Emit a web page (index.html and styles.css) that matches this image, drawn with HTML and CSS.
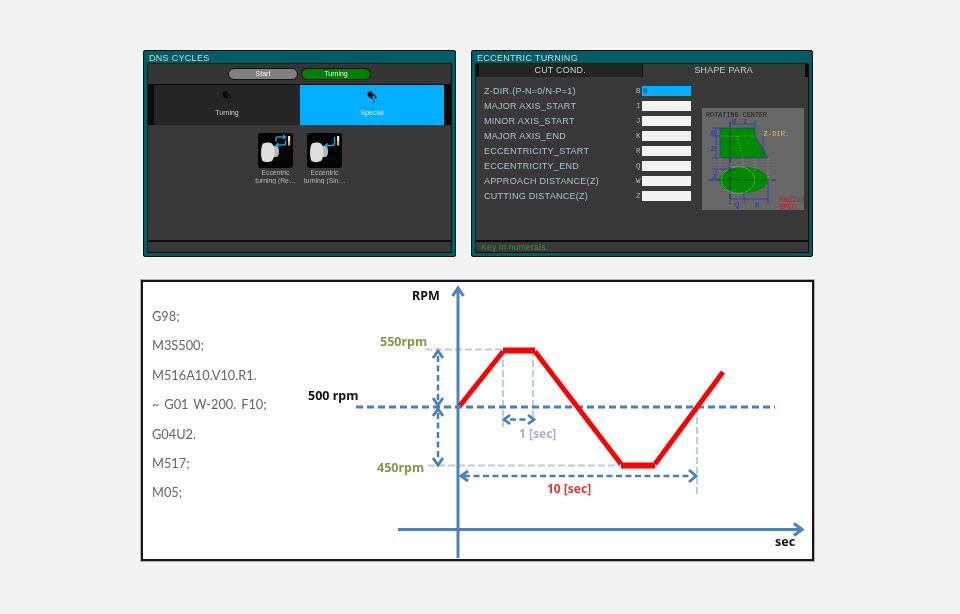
FILE: index.html
```html
<!DOCTYPE html>
<html lang="en">
<head>
<meta charset="utf-8">
<title>Eccentric turning</title>
<link rel="stylesheet" href="styles.css">
</head>
<body>
<div class="top">
  <section class="panel panel-left">
    <h2 class="title">DNS CYCLES</h2>
    <div class="screen">
      <div class="toolbar">
        <span class="pill pill-gray">Start</span>
        <span class="pill pill-green">Turning</span>
      </div>
      <div class="tabs">
        <div class="tab tab-dark">
          <svg class="print" viewBox="0 0 10 13"><path class="print-ink" d="M.5 2.500C1.500 0 4.500-.3 5.500 1.500 6.300 3 5 4.500 6 6.500 6.500 7.800 4.800 8 3.500 7.200 1.500 6 .1 4.300.5 2.500Z"/><circle class="print-ink" cx="7.300" cy="4" r="1.100"/><circle class="print-ink" cx="8.500" cy="6.300" r="1.100"/><path class="print-line" d="M7 8.500C7.500 10 7 11.500 5.500 12.500"/></svg>
          <span>Turning</span>
        </div>
        <div class="tab tab-blue">
          <svg class="print" viewBox="0 0 10 13"><path class="print-ink" d="M.5 2.500C1.500 0 4.500-.3 5.500 1.500 6.300 3 5 4.500 6 6.500 6.500 7.800 4.800 8 3.500 7.200 1.500 6 .1 4.300.5 2.500Z"/><circle class="print-ink" cx="7.300" cy="4" r="1.100"/><circle class="print-ink" cx="8.500" cy="6.300" r="1.100"/><path class="print-line" d="M7 8.500C7.500 10 7 11.500 5.500 12.500"/></svg>
          <span>Special</span>
        </div>
      </div>
      <div class="cycles">
        <div class="cycle">
          <svg class="cycle-icon" viewBox="0 0 35 35">
            <rect width="35" height="35" rx="3" fill="#050505"/>
            <path d="M13 13H18C20 13 21 15 21 18.500S20 24 18 24H13Z" fill="#b8b8b8"/>
            <path d="M5 10.500C8 9 12 9 14 10.500C16 13 16.500 16 16.500 19C16.500 23 15.500 26 14 28C11 29.500 7 29.500 4.500 28C2.500 24 2.500 14 5 10.500Z" fill="#dedede"/>
            <path d="M18 8.500V5.500C18 4.500 19 4 20 4H27M25 2L27.500 4L25 6" fill="none" stroke="#1d9be0" stroke-width="1.500"/>
            <path d="M27.500 7.500V10.500C27.500 11.500 26.500 12 25.500 12H18M20.500 10L18 12L20.500 14" fill="none" stroke="#1d9be0" stroke-width="1.500"/>
            <rect x="30" y="3" width="2.200" height="5" fill="#e8e8e8"/>
            <rect x="30" y="8" width="2.200" height="4.500" fill="#d8c020"/>
          </svg>
          <span class="cycle-name">Eccentric<br>turning (Re…</span>
        </div>
        <div class="cycle">
          <svg class="cycle-icon" viewBox="0 0 35 35">
            <rect width="35" height="35" rx="3" fill="#050505"/>
            <path d="M13 13H18C20 13 21 15 21 18.500S20 24 18 24H13Z" fill="#b8b8b8"/>
            <path d="M5 10.500C8 9 12 9 14 10.500C16 13 16.500 16 16.500 19C16.500 23 15.500 26 14 28C11 29.500 7 29.500 4.500 28C2.500 24 2.500 14 5 10.500Z" fill="#dedede"/>
            <path d="M27.500 4V10C27.500 12 26.500 12.500 25 12.500H18M20.500 10.500L18 12.500L20.500 14.500" fill="none" stroke="#1d9be0" stroke-width="1.500"/>
            <rect x="30" y="3" width="2.200" height="5" fill="#e8e8e8"/>
            <rect x="30" y="8" width="2.200" height="4.500" fill="#d8c020"/>
          </svg>
          <span class="cycle-name">Eccentric<br>turning (Sin…</span>
        </div>
      </div>
      <div class="status"></div>
    </div>
  </section>

  <section class="panel panel-right">
    <h2 class="title">ECCENTRIC TURNING</h2>
    <div class="screen">
      <div class="para-tabs">
        <div class="para-tab para-tab-off">CUT COND.</div>
        <div class="para-tab para-tab-on">SHAPE PARA</div>
      </div>
      <div class="form">
        <div class="fields">
          <span class="label">Z-DIR.(P-N=0/N-P=1)</span><span class="key">B</span><span class="field field-active">0</span>
          <span class="label">MAJOR AXIS_START</span><span class="key">I</span><span class="field"></span>
          <span class="label">MINOR AXIS_START</span><span class="key">J</span><span class="field"></span>
          <span class="label">MAJOR AXIS_END</span><span class="key">K</span><span class="field"></span>
          <span class="label">ECCENTRICITY_START</span><span class="key">R</span><span class="field"></span>
          <span class="label">ECCENTRICITY_END</span><span class="key">Q</span><span class="field"></span>
          <span class="label">APPROACH DISTANCE(Z)</span><span class="key">W</span><span class="field"></span>
          <span class="label">CUTTING DISTANCE(Z)</span><span class="key">Z</span><span class="field"></span>
        </div>
        <svg class="shape" viewBox="702 108 102 102">
          <rect x="702" y="108" width="102" height="102" fill="#676767"/>
          <text class="s-text s-dark" x="706" y="117">ROTATING CENTER</text>
          <path d="M720 128H755V135.500L768 158H720Z" fill="#008a00" stroke="#2030c0" stroke-width=".6"/>
          <ellipse cx="743.500" cy="180" rx="24.500" ry="13" fill="#008a00"/>
          <ellipse cx="738" cy="180" rx="17" ry="13.500" fill="none" stroke="#6fb56f" stroke-width=".7"/>
          <path d="M720 136H755" stroke="#8fae8f" stroke-width=".6" stroke-dasharray="1.500 1.500"/>
          <path d="M720 158V172M755 158V172M768 158V178M737 136L743 158V168" stroke="#a8a8a8" stroke-width=".6" stroke-dasharray="1.500 1.500" fill="none"/>
          <path d="M730 122V204" stroke="#111" stroke-width=".8" stroke-dasharray="5 1.500 1 1.500"/>
          <path d="M708 180H777" stroke="#222" stroke-width=".7" stroke-dasharray="5 1.500 1 1.500"/>
          <path d="M716 128V158M712 128H720M712 136H720M712 158H720M716 170V180M712 169H737M712 180H719M730 124H755M755 120V128M730 199H768M768 182V202M744 192V202M763 136V158" stroke="#2030c0" stroke-width=".7" fill="none"/>
          <text class="s-text s-blue" x="711" y="135">N</text>
          <text class="s-text s-blue" x="711" y="151">Z</text>
          <text class="s-text s-blue" x="711.500" y="179">J</text>
          <text class="s-text s-blue" x="732" y="124">R</text>
          <text class="s-text s-blue" x="743" y="124">I</text>
          <text class="s-text s-blue" x="735" y="207">Q</text>
          <text class="s-text s-blue" x="755" y="207">K</text>
          <text class="s-text s-yellow" x="763.500" y="136">Z-DIR.</text>
          <text class="s-text s-red" x="779" y="202">RADIUS</text>
          <text class="s-text s-red" x="779" y="209">SPEC.</text>
        </svg>
      </div>
      <div class="status status-msg">Key in numerals.</div>
    </div>
  </section>
</div>

<section class="graph">
  <ul class="code">
    <li>G98;</li>
    <li>M3S500;</li>
    <li>M516A10.V10.R1.</li>
    <li>~ G01 W-200. F10;</li>
    <li>G04U2.</li>
    <li>M517;</li>
    <li>M05;</li>
  </ul>
  <svg class="chart" viewBox="300 282 512 277">
    <path class="guide" d="M425 349.500H503M428 465.500H620M503 350V427M533 350V418M697 407V494"/>
    <path class="dash" d="M356 407H775"/>
    <path class="axis" d="M458 558V288M452.500 296L458 288L463.500 296"/>
    <path class="axis axis-x" d="M398 529.500H801M794 523.500L802 529.500L794 535.500"/>
    <path class="rpm" d="M460 405.500L503 351.500"/>
    <path class="rpm rpm-flat" d="M503 350.500H535M621 465.500H655"/>
    <path class="rpm" d="M535 351.500L621 464M655 464L723 372"/>
    <path class="measure" d="M438 356V401M438 413V460M464 476H690M510 419.500H528"/>
    <path class="head" d="M433 358L438 351L443 358M433 398L438 405L443 398M433 416L438 409L443 416M433 458L438 465L443 458M468 471L461 476L468 481M689 470L696 476L689 482M510 415L504 419.500L510 424M528 415L534 419.500L528 424"/>
    <text class="lbl lbl-black" x="412" y="300">RPM</text>
    <text class="lbl lbl-green" x="380" y="346">550rpm</text>
    <text class="lbl lbl-black" x="308" y="400">500 rpm</text>
    <text class="lbl lbl-green" x="377" y="472">450rpm</text>
    <text class="lbl lbl-purple" x="519" y="438">1 [sec]</text>
    <text class="lbl lbl-red" x="547" y="493">10 [sec]</text>
    <text class="lbl lbl-black" x="775" y="546">sec</text>
  </svg>
</section>
</body>
</html>
```
FILE: styles.css
```css
* { box-sizing: border-box; }
html, body { margin: 0; height: 100%; }
body {
  background: #f3f3f3;
  padding-top: 50px;
  overflow: hidden;
  font-family: "Liberation Sans", Arial, sans-serif;
}
.top {
  display: flex;
  gap: 15px;
  margin-left: 143px;
  filter: blur(.35px);
}
.panel {
  height: 207px;
  background: #005d63;
  border: 1px solid #111;
  border-radius: 2px;
  padding: 0 3px 3px;
  display: flex;
  flex-direction: column;
}
.panel-left { width: 313px; }
.panel-right { width: 342px; }
.title {
  margin: 0;
  height: 12px;
  padding-left: 2px;
  font-size: 9px;
  font-weight: normal;
  line-height: 14px;
  letter-spacing: .3px;
  color: #c6dede;
}
.screen {
  flex: 1;
  min-height: 0;
  background: #0a0a0a;
  border: 1px solid #0a0a0a;
  display: flex;
  flex-direction: column;
}
.toolbar {
  height: 20px;
  background: #353535;
  display: flex;
  justify-content: center;
  align-items: center;
  gap: 3px;
}
.pill {
  width: 70px;
  height: 12px;
  border: 1px solid #111;
  border-radius: 6px;
  text-align: center;
  font-size: 7px;
  line-height: 10px;
  color: #eee;
}
.pill-gray { background: #808080; }
.pill-green { background: #008000; }
.tabs {
  margin-top: 1px;
  height: 40px;
  display: flex;
  padding: 0 7px 0 6px;
}
.tab {
  display: flex;
  flex-direction: column;
  align-items: center;
  padding-top: 6px;
  gap: 5px;
  font-size: 7px;
  line-height: 8px;
  color: #c9c9c9;
}
.tab-dark { background: #252525; width: 146px; }
.tab-blue { background: #00b0ff; width: 144px; color: #d8eef8; }
.print { width: 10px; height: 13px; }
.print-ink { fill: #0a0a0a; }
.print-line { fill: none; stroke: #0a0a0a; stroke-width: .8; }
.cycles {
  flex: 1;
  background: #383838;
  display: flex;
  gap: 14px;
  padding: 8px 0 0 110px;
}
.cycle {
  width: 35px;
  display: flex;
  flex-direction: column;
  align-items: center;
}
.cycle-icon { width: 35px; height: 35px; flex: none; }
.cycle-name {
  margin-top: 1px;
  flex: none;
  width: 50px;
  height: 15px;
  overflow: hidden;
  text-align: center;
  white-space: nowrap;
  font-size: 6.800px;
  line-height: 7.500px;
  color: #b9b9b9;
}
.status {
  margin-top: 2px;
  height: 10px;
  background: #383838;
  flex: none;
}
.status-msg {
  padding-left: 5px;
  font-size: 8.500px;
  line-height: 11px;
  letter-spacing: .25px;
  color: #23a035;
}
.para-tabs {
  height: 13px;
  flex: none;
  padding: 0 3px;
  display: flex;
  background: #0a0a0a;
  font-size: 8.800px;
  line-height: 13px;
  text-align: center;
  letter-spacing: .3px;
  color: #c9d2d2;
}
.para-tab-off { width: 164px; background: #242424; border-right: 1px solid #0a0a0a; }
.para-tab-on { width: 163px; background: #383838; }
.form {
  flex: 1;
  min-height: 0;
  background: #383838;
  display: flex;
  align-items: flex-start;
  padding: 9px 0 0 8px;
}
.fields {
  display: grid;
  grid-template-columns: 152px 6px 49px;
  grid-auto-rows: 15px;
  width: 207px;
}
.label {
  font-size: 9px;
  line-height: 10px;
  letter-spacing: .28px;
  color: #a6c8c6;
  white-space: nowrap;
}
.key {
  font-family: "Liberation Mono", monospace;
  font-size: 7.500px;
  line-height: 10px;
  color: #b5b5b5;
}
.field {
  height: 10px;
  background: #f2f2f2;
}
.field-active {
  background: #00b0ff;
  padding-left: 1px;
  font-family: "Liberation Mono", monospace;
  font-size: 7.500px;
  line-height: 10px;
  color: #123;
}
.shape {
  width: 102px;
  height: 102px;
  margin: 22px 0 0 11px;
  flex: none;
}
.s-text { font-family: "Liberation Mono", monospace; font-size: 7.200px; }
.s-dark { fill: #1c1c1c; font-size: 6.800px; }
.s-blue { fill: #2030c0; }
.s-yellow { fill: #d8d020; }
.s-red { fill: #c02020; }
.graph {
  width: 673px;
  height: 281px;
  margin: 23px 0 0 141px;
  background: #fff;
  border: 2px solid #161616;
  box-shadow: 0 0 0 1px #b0b0b0;
  display: flex;
  filter: blur(.25px);
}
.code {
  list-style: none;
  margin: 0;
  padding: 20px 0 0 9px;
  width: 157px;
  flex: none;
  font-family: Lato, "Open Sans", sans-serif;
  font-size: 12.800px;
  line-height: 29.400px;
  word-spacing: 1.600px;
  color: #666;
}
.chart { width: 512px; height: 277px; flex: none; }
.guide { fill: none; stroke: #b9cde5; stroke-width: 2; stroke-dasharray: 7 3; }
.dash { fill: none; stroke: #4a7ebb; stroke-width: 2.800; stroke-dasharray: 7 4; }
.axis { fill: none; stroke: #4f81bd; stroke-width: 3; }
.axis-x { stroke-width: 3.200; }
.rpm { fill: none; stroke: #ff0000; stroke-width: 5; }
.rpm-flat { stroke-width: 6; }
.measure { fill: none; stroke: #4a7ebb; stroke-width: 2.500; stroke-dasharray: 6 3.500; }
.head { fill: none; stroke: #4a7ebb; stroke-width: 2.800; }
.lbl { font-family: "Noto Sans", sans-serif; font-size: 12.500px; font-weight: 700; }
.lbl-black { fill: #111; }
.lbl-green { fill: #7f9a45; }
.lbl-purple { fill: #b7aacb; font-size: 12px; }
.lbl-red { fill: #f03030; font-size: 12px; }
```
